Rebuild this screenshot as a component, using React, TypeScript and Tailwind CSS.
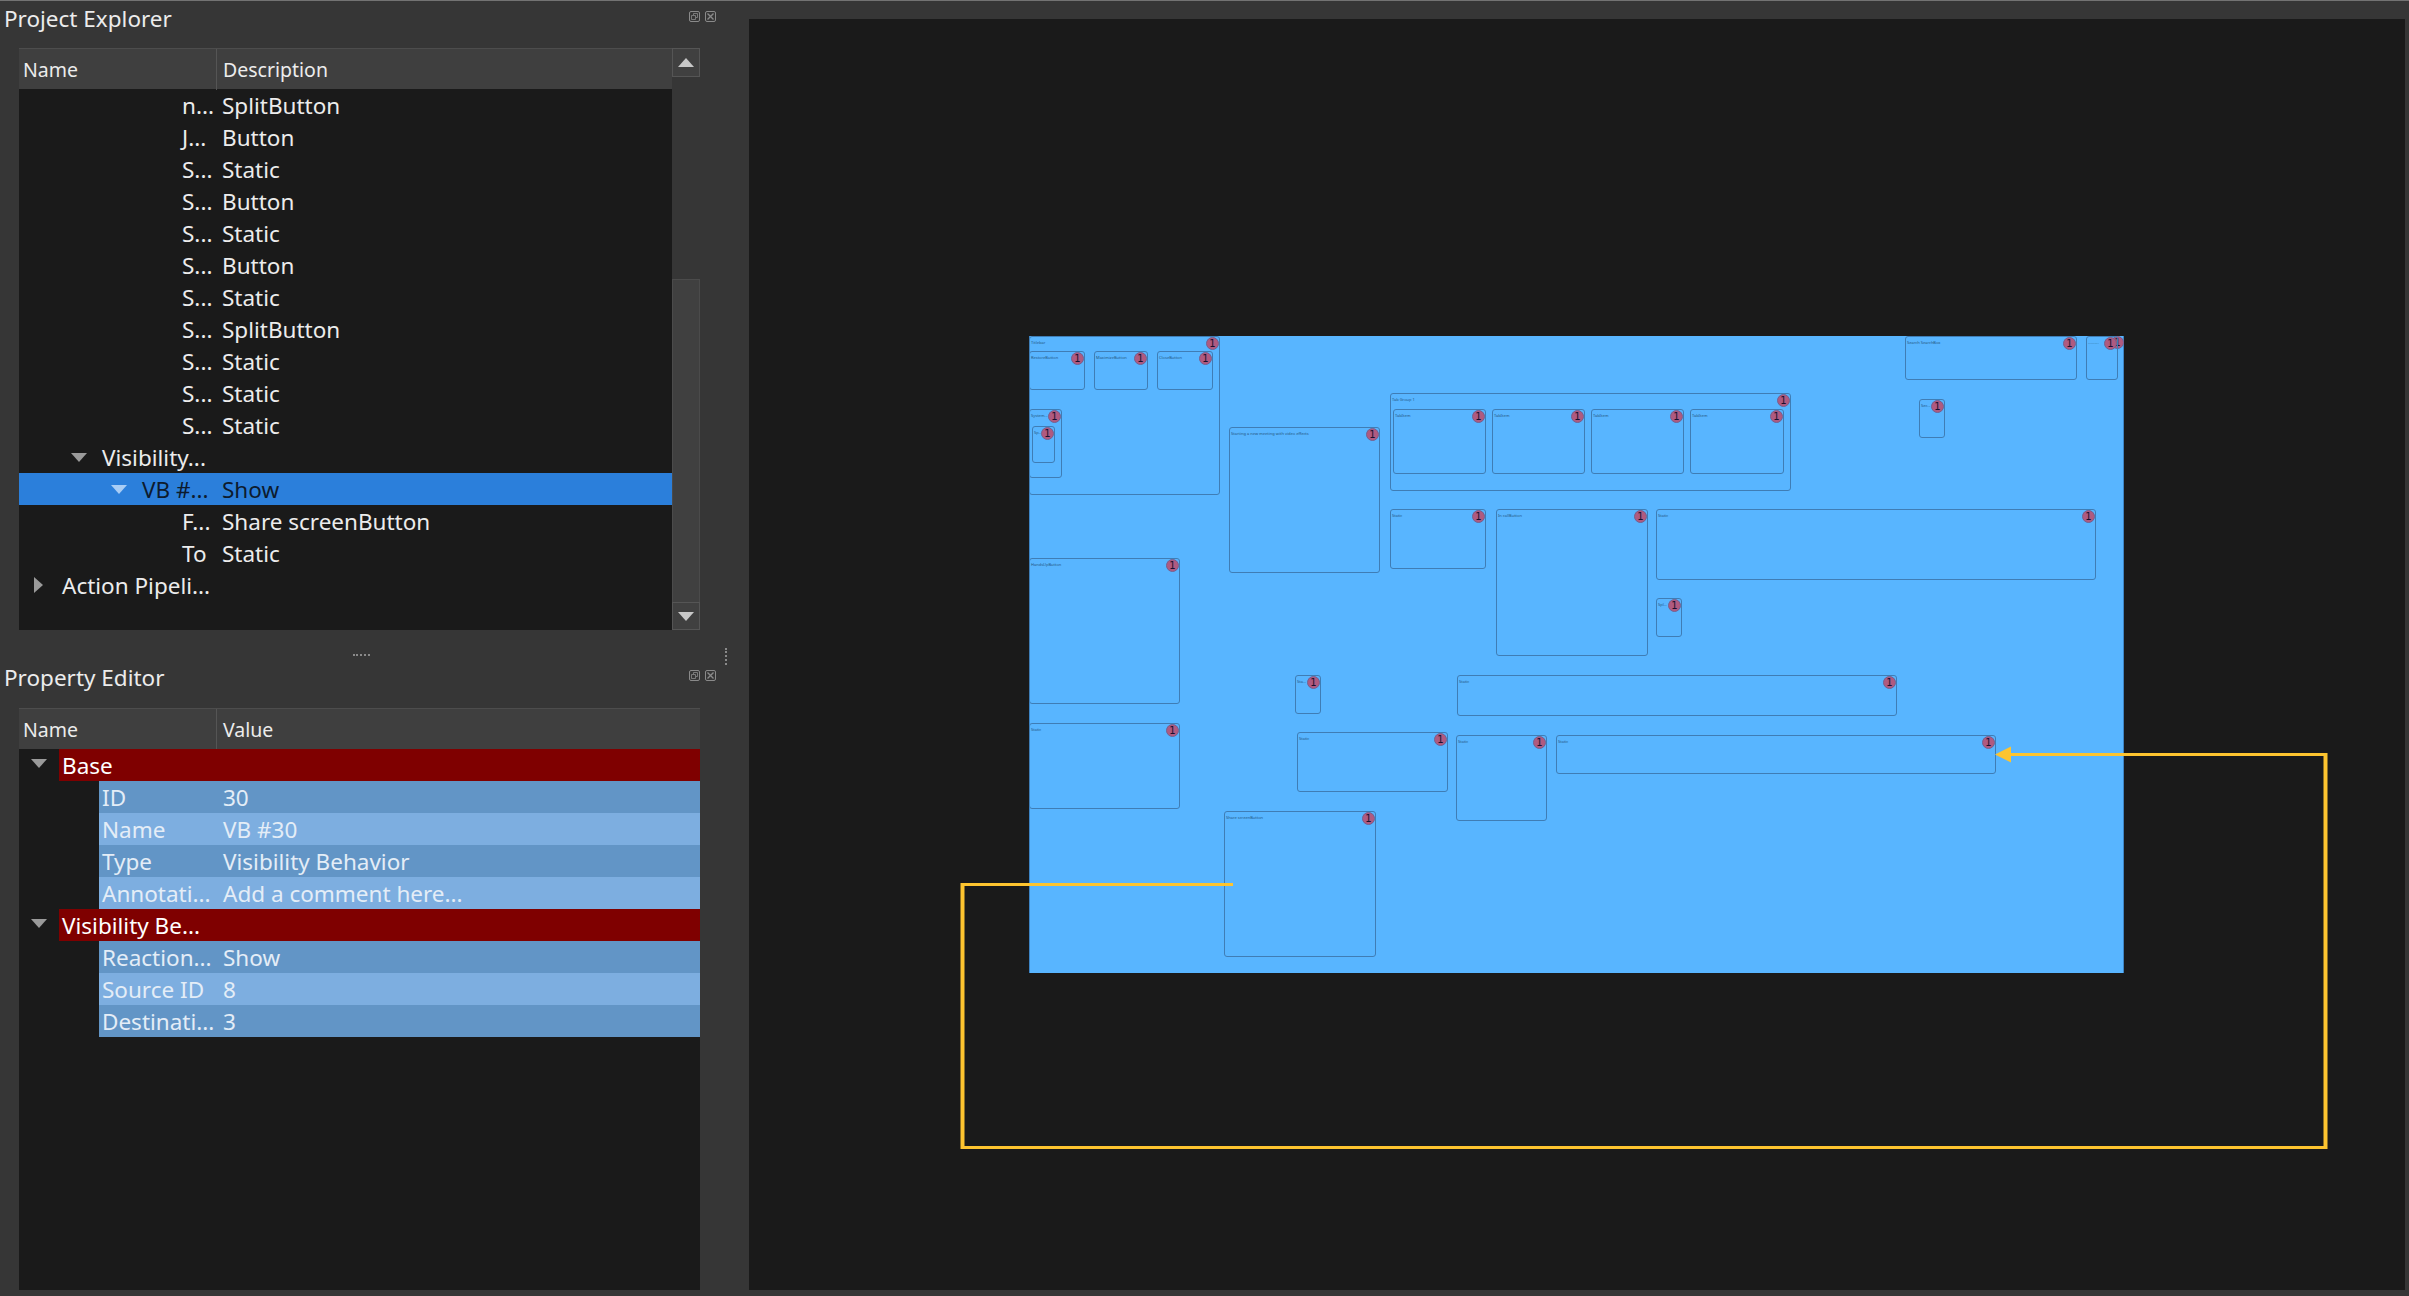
const uiFont = { fontFamily: '"Noto Sans", "Open Sans", sans-serif' };

// project tree rows
const treeRows = [
  { name: 'n...', desc: 'SplitButton', indent: 'pl-[163px]' },
  { name: 'J...', desc: 'Button', indent: 'pl-[163px]' },
  { name: 'S...', desc: 'Static', indent: 'pl-[163px]' },
  { name: 'S...', desc: 'Button', indent: 'pl-[163px]' },
  { name: 'S...', desc: 'Static', indent: 'pl-[163px]' },
  { name: 'S...', desc: 'Button', indent: 'pl-[163px]' },
  { name: 'S...', desc: 'Static', indent: 'pl-[163px]' },
  { name: 'S...', desc: 'SplitButton', indent: 'pl-[163px]' },
  { name: 'S...', desc: 'Static', indent: 'pl-[163px]' },
  { name: 'S...', desc: 'Static', indent: 'pl-[163px]' },
  { name: 'S...', desc: 'Static', indent: 'pl-[163px]' },
  { name: 'Visibility...', desc: '', indent: 'pl-[83px]', arrow: 'down', arrowPos: 'left-[52px]' },
  { name: 'VB #...', desc: 'Show', indent: 'pl-[123px]', arrow: 'down', arrowPos: 'left-[92px]', selected: true },
  { name: 'F...', desc: 'Share screenButton', indent: 'pl-[163px]' },
  { name: 'To', desc: 'Static', indent: 'pl-[163px]' },
  { name: 'Action Pipeli...', desc: '', indent: 'pl-[43px]', arrow: 'right', arrowPos: 'left-[15px]' },
];

const propGroups = [
  {
    title: 'Base',
    rows: [
      ['ID', '30'],
      ['Name', 'VB #30'],
      ['Type', 'Visibility Behavior'],
      ['Annotati...', 'Add a comment here...'],
    ],
  },
  {
    title: 'Visibility Be...',
    rows: [
      ['Reaction...', 'Show'],
      ['Source ID', '8'],
      ['Destinati...', '3'],
    ],
  },
];

// widgets on the design canvas, offsets taken from the blue window
const widgets = [
  { label: 'Titlebar', box: 'left-0 top-0 w-[191px] h-[159px]' },
  { label: 'RestoreButton', box: 'left-0 top-[15px] w-[56px] h-[39px]' },
  { label: 'MaximizeButton', box: 'left-[65px] top-[15px] w-[54px] h-[39px]' },
  { label: 'CloseButton', box: 'left-[128px] top-[15px] w-[56px] h-[39px]' },
  { label: 'System...', box: 'left-0 top-[73px] w-[33px] h-[69px]' },
  { label: 'Sp...', box: 'left-[3px] top-[90px] w-[23px] h-[37px]' },
  { label: 'Starting a new meeting with video effects', box: 'left-[200px] top-[91px] w-[151px] h-[146px]' },
  { label: 'HandsUpButton', box: 'left-0 top-[222px] w-[151px] h-[146px]' },
  { label: 'Static', box: 'left-0 top-[387px] w-[151px] h-[86px]' },
  { label: 'Tab Group 1', box: 'left-[361px] top-[57px] w-[401px] h-[98px]' },
  { label: 'TabItem', box: 'left-[364px] top-[73px] w-[93px] h-[65px]' },
  { label: 'TabItem', box: 'left-[463px] top-[73px] w-[93px] h-[65px]' },
  { label: 'TabItem', box: 'left-[562px] top-[73px] w-[93px] h-[65px]' },
  { label: 'TabItem', box: 'left-[661px] top-[73px] w-[94px] h-[65px]' },
  { label: 'Static', box: 'left-[361px] top-[173px] w-[96px] h-[60px]' },
  { label: 'In callButton', box: 'left-[467px] top-[173px] w-[152px] h-[147px]' },
  { label: 'Static', box: 'left-[627px] top-[173px] w-[440px] h-[71px]' },
  { label: 'Spl...', box: 'left-[627px] top-[262px] w-[26px] h-[39px]' },
  { label: 'Search SearchBox', box: 'left-[876px] top-0 w-[172px] h-[44px]' },
  { label: '..........', box: 'left-[1057px] top-0 w-[32px] h-[44px]' },
  { label: 'Sec...', box: 'left-[890px] top-[63px] w-[26px] h-[39px]' },
  { label: 'Sta...', box: 'left-[266px] top-[339px] w-[26px] h-[39px]' },
  { label: 'Static', box: 'left-[428px] top-[339px] w-[440px] h-[41px]' },
  { label: 'Static', box: 'left-[268px] top-[396px] w-[151px] h-[60px]' },
  { label: 'Static', box: 'left-[427px] top-[399px] w-[91px] h-[86px]' },
  { label: 'Static', box: 'left-[527px] top-[399px] w-[440px] h-[39px]' },
  { label: 'Share screenButton', box: 'left-[195px] top-[475px] w-[152px] h-[146px]' },
];

function Triangle({ dir, className }: { dir: string; className: string }) {
  if (dir === 'down') {
    return (
      <svg width="16" height="9" viewBox="0 0 16 9" className={className}>
        <path d="M0 0H16L8 9Z" fill="currentColor" />
      </svg>
    );
  }
  return (
    <svg width="9" height="16" viewBox="0 0 9 16" className={className}>
      <path d="M0 0L9 8L0 16Z" fill="currentColor" />
    </svg>
  );
}

function DockIcons() {
  return (
    <div className="flex gap-[5px] text-[#8a8a8a]">
      <svg width="11" height="11" viewBox="0 0 11 11" fill="none" stroke="currentColor">
        <rect x="0.5" y="0.5" width="10" height="10" rx="1.5" />
        <path d="M4.5 4V2.5H8.5V6.5H7M2.5 4.5H6.5V8.5H2.5Z" strokeWidth="0.8" />
      </svg>
      <svg width="11" height="11" viewBox="0 0 11 11" fill="none" stroke="currentColor">
        <rect x="0.5" y="0.5" width="10" height="10" rx="1.5" />
        <path d="M2.5 2.5L8.5 8.5M8.5 2.5L2.5 8.5" strokeWidth="1.4" />
      </svg>
    </div>
  );
}

function PanelTitle({ title, className }: { title: string; className: string }) {
  return (
    <div className={`flex justify-between pl-[4px] pr-[33px] ${className}`}>
      <span className="text-[22.5px] leading-[36px] text-[#ececec]">{title}</span>
      <div className="pt-[10px]">
        <DockIcons />
      </div>
    </div>
  );
}

function HeaderRow({ right }: { right: string }) {
  return (
    <div className="grid h-[41px] grid-cols-[198px_1fr] border-t border-[#4d4d4d] bg-[#3f3f3f] text-[19.5px] leading-[41px] text-[#ececec]">
      <div className="border-r border-[#555555] pl-[4px]">Name</div>
      <div className="pl-[6px]">{right}</div>
    </div>
  );
}

function ScrollBar() {
  return (
    <div className="flex w-[28px] flex-col bg-[#3b3b3b]">
      <div className="flex h-[29px] items-center justify-center border border-[#555555] bg-[#404040]">
        <svg width="16" height="9" viewBox="0 0 16 9" className="text-[#c8c8c8]">
          <path d="M0 9H16L8 0Z" fill="currentColor" />
        </svg>
      </div>
      <div className="h-[202px] bg-[#363636]" />
      <div className="flex-1 border-x border-t border-[#4b4b4b] bg-[#404040]" />
      <div className="flex h-[28px] items-center justify-center border border-[#555555] bg-[#404040]">
        <svg width="16" height="9" viewBox="0 0 16 9" className="text-[#c8c8c8]">
          <path d="M0 0H16L8 9Z" fill="currentColor" />
        </svg>
      </div>
    </div>
  );
}

function ProjectExplorer() {
  return (
    <div>
      <PanelTitle title="Project Explorer" className="h-[47px]" />
      <div className="ml-[19px] flex h-[582px] w-[681px]">
        <div className="flex flex-1 flex-col bg-[#1a1a1a]">
          <HeaderRow right="Description" />
          <div className="text-[22.5px] leading-[34px] text-[#ececec]">
            {treeRows.map((r, i) => (
              <div
                key={i}
                className={`relative grid h-8 grid-cols-[198px_1fr] ${r.selected ? 'bg-[#2b7fdb] text-[#0d1b2e]' : ''}`}
              >
                {r.arrow && (
                  <Triangle
                    dir={r.arrow}
                    className={`absolute ${r.arrowPos} ${r.arrow === 'down' ? 'top-[12px]' : 'top-2'} ${r.selected ? 'text-[#a9cdf5]' : 'text-[#9a9a9a]'}`}
                  />
                )}
                <div className={`whitespace-nowrap ${r.indent}`}>{r.name}</div>
                <div className="pl-[5px]">{r.desc}</div>
              </div>
            ))}
          </div>
        </div>
        <ScrollBar />
      </div>
    </div>
  );
}

function PropertyEditor() {
  return (
    <div>
      <PanelTitle title="Property Editor" className="h-[48px]" />
      <div className="ml-[19px] flex h-[582px] w-[681px] flex-col bg-[#1a1a1a]">
        <HeaderRow right="Value" />
        <div className="text-[22.5px] leading-[34px]">
          {propGroups.map((g) => (
            <div key={g.title}>
              <div className="flex h-8">
                <div className="flex w-10 items-center justify-center text-[#9a9a9a]">
                  <Triangle dir="down" className="mt-[-4px]" />
                </div>
                <div className="flex-1 bg-[#7f0000] pl-[3px] text-white">{g.title}</div>
              </div>
              {g.rows.map(([k, v], i) => (
                <div
                  key={k}
                  className={`ml-20 grid h-8 grid-cols-[120px_1fr] text-[#e4edf7] ${i % 2 === 0 ? 'bg-[#6295c6]' : 'bg-[#7daee0]'}`}
                >
                  <div className="whitespace-nowrap pl-[3px]">{k}</div>
                  <div className="pl-1">{v}</div>
                </div>
              ))}
            </div>
          ))}
        </div>
      </div>
    </div>
  );
}

function Splitter() {
  return (
    <div className="relative h-[30px]">
      <div className="absolute left-[353px] top-[24px] h-[2px] w-[17px] border-t-2 border-dotted border-[#8a8a8a]" />
      <div className="absolute left-[725px] top-[18px] h-[17px] w-[2px] border-l-2 border-dotted border-[#8a8a8a]" />
    </div>
  );
}

function Badge() {
  return (
    <div
      className="absolute right-0 top-0 flex h-[13px] w-[13px] items-center justify-center rounded-full border border-[#75608f] bg-[#b05a80] text-[10px] leading-none text-[#1a1030]"
      style={{ fontFamily: '"DejaVu Sans", sans-serif' }}
    >
      1
    </div>
  );
}

function DesignCanvas() {
  return (
    <div className="relative flex-1 bg-[#1a1a1a]">
      <div className="absolute left-[280px] top-[317px] h-[637px] w-[1095px] bg-[#58b5ff] shadow-[inset_1px_0_0_#3d84c4,inset_-1px_0_0_#3d84c4]">
        <Badge />
        {widgets.map((w, i) => (
          <div key={i} className={`absolute rounded-[3px] border border-[#3f7db5] ${w.box}`}>
            <div className="overflow-hidden whitespace-nowrap pl-px pt-[3px] text-[4px] leading-[6px] text-[#25567f]">
              {w.label}
            </div>
            <Badge />
          </div>
        ))}
      </div>
      <svg className="absolute inset-0 h-full w-full" fill="none">
        <path d="M484 865.5H213" stroke="#fdc42f" strokeWidth="3" />
        <path d="M213.5 864V1130" stroke="#fdc42f" strokeWidth="4" />
        <path d="M212 1128.5H1578" stroke="#fdc42f" strokeWidth="3" />
        <path d="M1576.5 1130V734" stroke="#fdc42f" strokeWidth="4" />
        <path d="M1578 735.5H1258" stroke="#fdc42f" strokeWidth="3" />
        <path d="M1246 735.5L1262 727.5V743.5Z" fill="#fdc42f" />
      </svg>
    </div>
  );
}

export default function App() {
  return (
    <div className="flex h-[1296px] w-[2409px] flex-col overflow-hidden bg-[#363636]" style={uiFont}>
      <div className="h-px bg-[#737373]" />
      <div className="flex flex-1">
        <div className="w-[749px]">
          <ProjectExplorer />
          <Splitter />
          <PropertyEditor />
        </div>
        <div className="flex flex-1 flex-col pb-[6px] pr-[4px] pt-[18px]">
          <DesignCanvas />
        </div>
      </div>
    </div>
  );
}
